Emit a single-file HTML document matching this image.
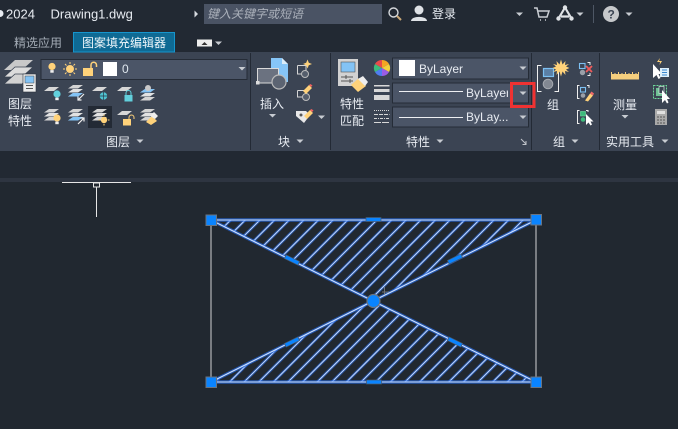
<!DOCTYPE html>
<html><head><meta charset="utf-8"><style>
html,body{margin:0;padding:0;background:#212830;width:678px;height:429px;overflow:hidden}
svg{display:block;position:absolute;left:0;top:0}
text{font-family:"Liberation Sans","Noto Sans CJK SC",sans-serif;fill:#e8ecf2;font-size:12px}
</style></head><body>
<svg width="678" height="429" viewBox="0 0 678 429" xmlns="http://www.w3.org/2000/svg" style="overflow:hidden">
<defs>
<path id="dn" d="M-3.5 -1.5H3.5L0 2Z" fill="#c8ccd2"/>
<path id="lay" d="M-3 0H7L12 -4H2Z" fill="#d6d6d6"/>
<g id="st">
<path d="M0 3.500H10L15 0H5Z" fill="#d4d4d4"/><path d="M0 7.500H10L15 4H5Z" fill="#e2e2e2"/><path d="M0 11.500H10L15 8H5Z" fill="#d4d4d4"/>
</g>
<g id="bulb"><circle cx="0" cy="0" r="3.6" fill="currentColor"/><rect x="-1.7" y="3.6" width="3.4" height="2.6" fill="#eee"/></g>
<g id="lockc"><rect x="-4" y="-1" width="8" height="6.5" fill="currentColor"/></g>
<clipPath id="tri"><path d="M211 220H536L373 301L211 382H536L373 301Z"/></clipPath>
<path id="hatch" d="M216.100 220l-162 162M230.700 220l-162 162M245.300 220l-162 162M259.900 220l-162 162M274.600 220l-162 162M289.200 220l-162 162M303.800 220l-162 162M318.400 220l-162 162M333 220l-162 162M347.700 220l-162 162M362.300 220l-162 162M376.900 220l-162 162M391.500 220l-162 162M406.100 220l-162 162M420.800 220l-162 162M435.400 220l-162 162M450 220l-162 162M464.600 220l-162 162M479.200 220l-162 162M493.900 220l-162 162M508.500 220l-162 162M523.100 220l-162 162M537.700 220l-162 162M552.300 220l-162 162M567 220l-162 162M581.600 220l-162 162M596.200 220l-162 162M610.800 220l-162 162M625.400 220l-162 162M640.100 220l-162 162M654.700 220l-162 162M669.300 220l-162 162M683.900 220l-162 162M698.500 220l-162 162"/>
</defs>

<!-- backgrounds -->
<rect width="678" height="52" fill="#222933"/>
<rect y="52" width="678" height="99" fill="#3b4453"/>
<rect y="151" width="678" height="27" fill="#222933"/>
<rect y="178" width="678" height="4" fill="#2e3541"/>
<rect y="182" width="678" height="247" fill="#212830"/>

<!-- title bar -->
<path d="M0 10A3.500 3.500 0 0 1 0 17Z" fill="#e8ecf2"/>
<text x="6" y="18.500" style="font-size:13px">2024</text>
<text x="50.500" y="18.500" style="font-size:13px">Drawing1.dwg</text>
<path d="M194.500 10.500L198 14L194.500 17.500Z" fill="#d8dce2"/>
<rect x="204" y="4" width="178" height="20" fill="#4a5364"/>
<text x="207" y="18" style="font-size:12px;font-style:italic;fill:#aab0ba">键入关键字或短语</text>
<circle cx="393.500" cy="12.500" r="4.500" fill="none" stroke="#d5d8dc" stroke-width="1.400"/><path d="M397 16L401 20" stroke="#c9a777" stroke-width="2"/>
<circle cx="419" cy="10" r="4.500" fill="#dfe2e6"/><path d="M411 21C411 15.500 427 15.500 427 21Z" fill="#dfe2e6"/>
<text x="432" y="18" style="font-size:12px">登录</text>
<use href="#dn" x="519.500" y="14"/>
<path d="M534 8H537L539 17H547L549 11H538M540 20H541M545 20H546" fill="none" stroke="#c9cdd3" stroke-width="1.500"/>
<path d="M565 7.500L558.500 18.500M565 7.500L571.500 18.500M561 16.500L569 16.500" stroke="#dfe2e6" stroke-width="2.200" fill="none"/><circle cx="565" cy="7.500" r="2.200" fill="#dfe2e6"/><circle cx="558.500" cy="18.500" r="2.200" fill="#dfe2e6"/><circle cx="571.500" cy="18.500" r="2.200" fill="#dfe2e6"/>
<use href="#dn" x="580" y="14"/>
<rect x="593" y="5" width="1" height="18" fill="#4e5765"/>
<circle cx="611" cy="14" r="8" fill="#c6c8cb"/><text x="607.500" y="18.500" style="font-size:12px;font-weight:bold;fill:#3b4453">?</text>
<use href="#dn" x="629" y="14"/>

<!-- tabs -->
<text x="14" y="47" style="font-size:12px;fill:#a3abb5">精选应用</text>
<rect x="73.500" y="32.500" width="101" height="19.500" fill="#0f6a94" stroke="#1695cd"/>
<text x="82" y="47" style="font-size:12px;fill:#eef6fa">图案填充编辑器</text>
<rect x="197" y="39.500" width="15" height="7" fill="#eeeeee"/><path d="M201.500 45L204.500 42L207.500 45Z" fill="#333"/>
<use href="#dn" x="218.500" y="43"/>

<!-- separators -->
<g fill="#232a35"><rect x="250" y="53" width="1" height="97"/><rect x="330" y="53" width="1" height="97"/><rect x="531" y="53" width="1" height="97"/><rect x="599" y="53" width="1" height="97"/></g>

<!-- panel titles -->
<text x="106" y="146" style="font-size:12px">图层</text><use href="#dn" x="140" y="141"/>
<text x="278" y="146" style="font-size:12px">块</text><use href="#dn" x="300" y="141"/>
<text x="406" y="146" style="font-size:12px">特性</text><use href="#dn" x="440" y="141"/>
<path d="M521 139L526 144M526 141V144.500H522.500" stroke="#c0c4ca" fill="none"/>
<text x="553" y="146" style="font-size:12px">组</text><use href="#dn" x="575" y="141"/>
<text x="606" y="146" style="font-size:12px">实用工具</text><use href="#dn" x="665" y="141"/>

<!-- layer properties big icon -->
<path d="M4 70H22L33 60H15Z" fill="#c9c9c9"/><path d="M4 77H22L33 67H15Z" fill="#dcdcdc" stroke="#3b4453" stroke-width=".8"/><path d="M4 84H22L33 74H15Z" fill="#d2d2d2" stroke="#3b4453" stroke-width=".8"/>
<rect x="23" y="74" width="13" height="18" fill="#ececec" stroke="#2b323d" stroke-width=".6"/><rect x="25" y="76" width="9" height="7" fill="#83c3f5" stroke="#444" stroke-width=".5"/><path d="M26 85.500H33M26 88.500H33" stroke="#555" stroke-width="1"/>
<text x="8" y="108" style="font-size:12px">图层</text><text x="8" y="125" style="font-size:12px">特性</text>

<!-- layer combo -->
<rect x="41" y="59.500" width="206" height="20" fill="#4b5567" stroke="#252c37"/>
<g color="#ffd27a"><use href="#bulb" x="52" y="66.500"/></g>
<circle cx="70" cy="69" r="4" fill="#ffd27a"/><path d="M70 62V64M70 74V76M63 69H65M75 69H77M65 64L66.500 65.500M73.500 72.500L75 74M65 74L66.500 72.500M73.500 65.500L75 64" stroke="#ffd27a" stroke-width="1"/>
<rect x="83" y="68" width="10" height="8" fill="#ffd27a"/><path d="M91 68V65A2.500 2.500 0 0 1 96.500 65V67" fill="none" stroke="#ffd27a" stroke-width="1.500"/>
<rect x="103" y="62" width="14" height="14" fill="#fff"/>
<text x="122" y="73" style="font-size:12px;fill:#dfe7ee">0</text>
<use href="#dn" x="242" y="68.500"/>

<!-- layer small icons row 1 -->
<use href="#lay" x="47" y="91"/><g color="#62d0dc"><use href="#bulb" x="57" y="94"/></g>
<use href="#st" x="68" y="85"/><path d="M68 96.500H78L83 93H73Z" fill="#83c3f5"/><path d="M84 94L78 100M78 96.500V100H81.500" stroke="#eee" stroke-width="1.200" fill="none"/>
<use href="#lay" x="95" y="91"/><circle cx="103.500" cy="96" r="3.800" fill="#4fc3d2"/><path d="M99 96H108M103.500 92V100" stroke="#2b3a4a" stroke-width=".7"/>
<use href="#lay" x="120" y="91"/><g color="#62d0dc"><use href="#lockc" x="128.500" y="96"/></g><path d="M126 95V93A2.500 2.500 0 0 1 131 93V95" stroke="#62d0dc" fill="none"/>
<use href="#st" x="140" y="89"/><path d="M140 92.500H150L155 89H145Z" fill="#83c3f5"/><circle cx="148" cy="88" r="3" fill="#c9c9c9"/>

<!-- row 2 -->
<rect x="88" y="106" width="24" height="22" fill="#232a35"/>
<use href="#st" x="44" y="109"/><g color="#ffd27a"><use href="#bulb" x="57" y="118"/></g>
<use href="#st" x="68" y="109"/><path d="M68 120.500H78L83 117H73Z" fill="#83c3f5"/><path d="M78 124L84 118M80.500 118H84V121.500" stroke="#eee" stroke-width="1.200" fill="none"/>
<use href="#st" x="92" y="109"/><circle cx="104" cy="120" r="3.200" fill="#ffd27a"/><path d="M104 114.500V116M104 124V125.500M98.500 120H100M108 120H109.500" stroke="#ffd27a" stroke-width="1"/>
<use href="#lay" x="120" y="115"/><g color="#ffd27a"><use href="#lockc" x="127" y="120"/></g><path d="M129 119V117.500A2.500 2.500 0 0 1 134 117.500V119" stroke="#ffd27a" fill="none"/>
<use href="#st" x="140" y="109"/><path d="M146 122L152 116L157 121L151 125Z" fill="#ffd27a"/><path d="M150 116L154 112L158 116L155 119Z" fill="#eee"/>

<!-- insert -->
<path d="M271 58H282L288 64V82H271Z" fill="#86c5f7"/><path d="M282 58V64H288Z" fill="#dcecf8"/>
<rect x="257.500" y="68.500" width="21" height="14.500" fill="#6b7280" stroke="#dadada"/>
<circle cx="279" cy="82" r="7" fill="#5c6472" stroke="#bbb" stroke-width="1.200"/>
<rect x="256" y="81" width="3.500" height="3.500" fill="#ddd"/>
<text x="260" y="108" style="font-size:12px">插入</text><use href="#dn" x="272.500" y="115.500"/>
<path d="M297.500 65.500H306V74M297.500 65.500V74H303" fill="none" stroke="#d5d5d5"/><circle cx="305" cy="74" r="3.500" fill="#555e6c" stroke="#bbb"/><path d="M307.500 59.500L308.800 62.800L312 64L308.800 65.200L307.500 68.500L306.200 65.200L303 64L306.200 62.800Z" fill="#ffd27a"/>
<path d="M297.500 90.500H306V97M297.500 90.500V97H303" fill="none" stroke="#d5d5d5"/><circle cx="306" cy="97" r="3.500" fill="#555e6c" stroke="#bbb"/><path d="M303 91L309 85L312 88L306 94Z" fill="#ffd27a"/><path d="M309 85L311 87L312.500 85.500L310.500 84Z" fill="#f06060"/>
<path d="M296 111H306L310 115L304 123L296 116Z" fill="#e8e8e8"/><circle cx="301" cy="115" r="1.500" fill="#555"/><path d="M304 116L310 110L313 113L307 119Z" fill="#ffd27a"/><path d="M310 110L312 112L313.500 110.500L311.500 109Z" fill="#f06060"/>
<use href="#dn" x="321.500" y="117"/>

<!-- match properties -->
<rect x="338" y="59" width="20" height="27" fill="#d2d2d2"/><rect x="341" y="62" width="14" height="10" fill="#83c3f5" stroke="#555" stroke-width=".6"/><path d="M341 77H353M341 81H353M346 75V79M350 79V83" stroke="#555" stroke-width="1"/>
<path d="M351 85L359 78L366 86L358 92Z" fill="#ffd27a"/><path d="M358 79L363 76L368 82L365 86Z" fill="#eee"/>
<text x="340" y="108" style="font-size:12px">特性</text><text x="340" y="125" style="font-size:12px">匹配</text>

<!-- color wheel -->
<path d="M382 68L382 60A8 8 0 0 1 389 64Z" fill="#f5a623"/><path d="M382 68L389 64A8 8 0 0 1 389 72Z" fill="#f3d23e"/><path d="M382 68L389 72A8 8 0 0 1 382 76Z" fill="#9b5de5"/><path d="M382 68L382 76A8 8 0 0 1 375 72Z" fill="#4f7df0"/><path d="M382 68L375 72A8 8 0 0 1 375 64Z" fill="#3dbb7c"/><path d="M382 68L375 64A8 8 0 0 1 382 60Z" fill="#e84b4b"/>
<g fill="#d8d8d8"><rect x="374" y="85" width="15.500" height="1.500"/><rect x="374" y="89" width="15.500" height="3"/><rect x="374" y="95" width="15.500" height="5"/></g>
<g stroke="#d8d8d8" fill="none"><path d="M374 110.500H389.500" stroke-dasharray="1 1"/><path d="M374 114.500H389.500" stroke-dasharray="4 1"/><path d="M374 118.500H389.500" stroke-dasharray="3 1 1 1"/><path d="M374 122.500H389.500" stroke-dasharray="7 1"/></g>

<!-- prop combos -->
<g fill="#4b5567" stroke="#252c37"><rect x="392.500" y="58" width="136" height="21"/><rect x="392.500" y="83" width="136" height="20"/><rect x="392.500" y="107" width="136" height="20"/></g>
<rect x="399" y="60" width="16" height="16" fill="#fff"/>
<text x="419" y="73" style="font-size:12px">ByLayer</text>
<rect x="399" y="91" width="64" height="1" fill="#eef0f3"/><text x="466" y="97" style="font-size:12px">ByLayer</text><rect x="508" y="84" width="20" height="18" fill="#4b5567"/>
<rect x="399" y="117" width="64" height="1" fill="#eef0f3"/><text x="466" y="121" style="font-size:12px">ByLay...</text>
<use href="#dn" x="523" y="68"/><use href="#dn" x="523" y="93"/><use href="#dn" x="523" y="117"/>
<rect x="511.500" y="83.500" width="22.500" height="23" fill="none" stroke="#f03232" stroke-width="3"/>

<!-- group -->
<path d="M541.500 65.500H537.500V91.500H541.500M554.500 91.500H558.500V72" fill="none" stroke="#eee" stroke-width="1"/>
<rect x="543.500" y="68.500" width="10" height="8" fill="#5b7fa5" stroke="#7cc0f2" stroke-width="1.200"/><circle cx="548" cy="84" r="4.800" fill="#828892" stroke="#a5a9b0"/>
<path d="M561 59.500L562.500 64.500L565.500 61L565 65L569 64L566 66.500L569.500 68L566 69.500L569 72L565 71L565.500 75L562.500 71.500L561 76.500L559.500 71.500L556.500 75L557 71L553 72L556 69.500L552.500 68L556 66.500L553 64L557 65L556.500 61L559.500 64.500Z" fill="#ffd27a"/>
<text x="547" y="109" style="font-size:12px">组</text>
<!-- group icons -->
<path d="M587.500 62.500H590V65M587.500 75.500H590V73" fill="none" stroke="#eee"/><rect x="579.500" y="63.500" width="5.500" height="5" fill="none" stroke="#7cc0f2" stroke-width="1.100"/><circle cx="582.500" cy="72.500" r="2.700" fill="#9aa0a8"/><path d="M586 66L592 72M592 66L586 72" stroke="#ef5a5a" stroke-width="1.800"/>
<path d="M579.500 85.500H577.500V98.500H579.500M587 85.500H589V88" fill="none" stroke="#eee"/><rect x="580.500" y="87.500" width="5" height="4.500" fill="none" stroke="#7cc0f2" stroke-width="1.100"/><circle cx="583" cy="95.500" r="2.300" fill="#9aa0a8"/><path d="M585 100.500L590 93.500L593 95.500L588 101.500Z" fill="#ffd27a"/><path d="M590 93.500L591.500 91.500L594 93.500L593 95.500Z" fill="#ef6a6a"/>
<path d="M579.500 110.500H577.500V123.500H579.500M586 110.500H588V112" fill="none" stroke="#eee"/><rect x="580.500" y="111.500" width="5" height="4.500" fill="#3dbb7c" stroke="#6fe0a0" stroke-width=".6"/><circle cx="583" cy="119.500" r="2.300" fill="#3dbb7c"/><path d="M586 114V125L588.500 122.500L590.500 125.500L592 124.500L590.500 121.500H593.500Z" fill="#fff"/>

<!-- utilities -->
<rect x="611" y="74" width="28" height="5.500" fill="#f5cf7e"/><path d="M611.500 72V74M615 73V74M618.500 72V74M622 73V74M625.500 72V74M629 73V74M632.500 72V74M636 73V74M638.500 72V74" stroke="#f5cf7e"/>
<text x="613" y="109" style="font-size:12px">测量</text><use href="#dn" x="625" y="116.500"/>
<path d="M653 64V78L656.500 75L658.500 79L660.500 78L658.500 74H662Z" fill="#fff"/><path d="M660 58L659 61H662L659.500 65L660 62H657Z" fill="#ffd27a"/><rect x="660" y="68" width="9" height="9" fill="#dff0fb"/><path d="M662 70H667M662 72.500H667M662 75H667" stroke="#3a88d0"/>
<rect x="653.500" y="85.500" width="13" height="13" fill="none" stroke="#6fd79a" stroke-dasharray="2 1"/><rect x="656" y="88" width="8" height="8" fill="#6fbf94"/><rect x="659" y="86.500" width="5" height="7" fill="#3b4453" stroke="#cfeede" stroke-width=".7"/><path d="M662 90V103L665 100L667 103.500L668.500 102.500L667 99H670Z" fill="#fff"/>
<rect x="655" y="109" width="12" height="16" fill="#aaaaaa"/><rect x="657" y="111" width="8" height="3" fill="#e0e0e0"/><path d="M657 117H665M657 120H665M657 123H665" stroke="#555" stroke-dasharray="2 1"/>

<!-- crosshair -->
<rect x="62" y="182" width="69" height="1" fill="#e6e6e6"/>
<rect x="93.500" y="183" width="6" height="4" fill="#212830" stroke="#e6e6e6"/>
<rect x="96" y="187" width="1" height="30" fill="#e6e6e6"/>

<!-- rectangle sides -->
<path d="M211 220V382M536 220V382" stroke="#b4b6b9" stroke-width="1.200"/>

<!-- hatch -->
<g clip-path="url(#tri)" fill="none">
<use href="#hatch" stroke="#2a6ce6" stroke-width="3" stroke-opacity=".6"/>
<use href="#hatch" stroke="#c4daff" stroke-width="1"/>
</g>
<!-- triangle outlines -->
<path d="M211 220H536L373 301L211 382H536L373 301Z" fill="none" stroke="#2a6ce6" stroke-width="3.400" stroke-opacity=".7"/>
<path d="M211 220H536L373 301L211 382H536L373 301Z" fill="none" stroke="#cfe2ff" stroke-width="1.100"/>

<!-- cursor cross near center -->
<path d="M382 292H389M384.500 287V295" stroke="#8d9196" stroke-width="1" opacity=".7"/>

<!-- mid grips -->
<g fill="#0a84ff" stroke="#4a5a6c" stroke-width=".7">
<rect x="366" y="217.500" width="15" height="4"/>
<rect x="366.500" y="380" width="15" height="4"/>
<rect x="-7.500" y="-2" width="15" height="4" transform="translate(292 260) rotate(26)"/>
<rect x="-7.500" y="-2" width="15" height="4" transform="translate(455 259) rotate(-26)"/>
<rect x="-7.500" y="-2" width="15" height="4" transform="translate(292 342) rotate(-26)"/>
<rect x="-7.500" y="-2" width="15" height="4" transform="translate(455 342) rotate(26)"/>
</g>
<!-- corner grips -->
<g fill="#0a84ff" stroke="#6a7480" stroke-width="1">
<rect x="206" y="215" width="10.500" height="10.500"/>
<rect x="531" y="214.500" width="10.500" height="10.500"/>
<rect x="206" y="377" width="10.500" height="10.500"/>
<rect x="531" y="377" width="10.500" height="10.500"/>
</g>
<circle cx="373.500" cy="301" r="6.500" fill="#0a84ff" stroke="#6a7480" stroke-width="1.200"/>
</svg>
</body></html>
